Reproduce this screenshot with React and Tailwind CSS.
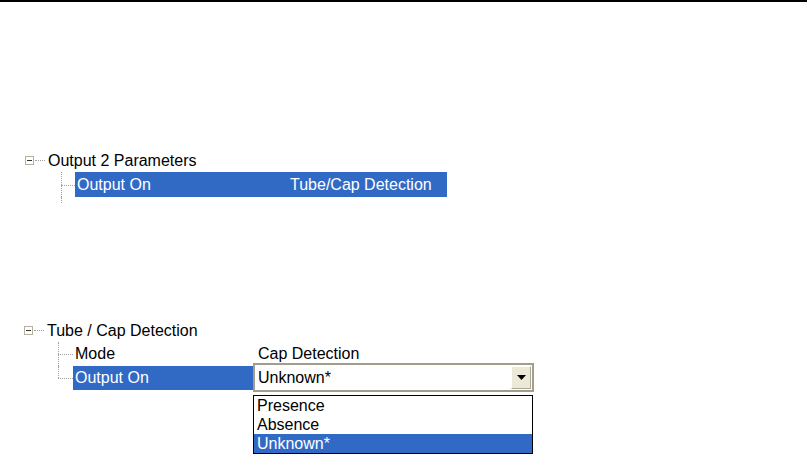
import React from 'react';

// XP-style minus box for an expanded tree node
function ExpandBox() {
  return (
    <div className="flex h-[9px] w-[9px] shrink-0 items-center justify-center border border-[#B5B19E] bg-white">
      <div className="h-[1px] w-[5px] bg-[#333]" />
    </div>
  );
}

function TreeHeader({ label, indent }) {
  return (
    <div className={`flex h-[24px] items-center ${indent}`}>
      <ExpandBox />
      <div className="ml-[1px] w-[10px] border-t border-dotted border-[#A0A0A0]" />
      <span className="ml-[3px] mt-[2px] text-[16px] leading-none text-black">{label}</span>
    </div>
  );
}

// vertical + horizontal dotted connector for a child row
function Connector({ last, width }) {
  return (
    <div className={`relative h-full shrink-0 ${width}`}>
      <div
        className={`border-l border-dotted border-[#A0A0A0] ${last ? 'h-1/2' : 'h-full'}`}
      />
      <div className="absolute left-0 top-1/2 w-full border-t border-dotted border-[#A0A0A0]" />
    </div>
  );
}

export default function App() {
  return (
    <div
      className="relative h-[456px] w-[810px] overflow-hidden bg-white text-black"
      style={{ fontFamily: '"Liberation Sans", Arial, sans-serif' }}
    >
      {/* top rule */}
      <div className="h-[2px] w-[807px] bg-black" />

      {/* Output 2 Parameters */}
      <div className="mt-[146px]">
        <TreeHeader label="Output 2 Parameters" indent="pl-[25px]" />
        <div className="flex h-[25px] pl-[61px]">
          <Connector width="w-[14px]" />
          <div className="flex w-[372px] items-center bg-[#316AC5] text-[16px] text-white">
            <span className="w-[215px] pl-[2px]">Output On</span>
            <span>Tube/Cap Detection</span>
          </div>
        </div>
        <div className="ml-[61px] h-[6px] border-l border-dotted border-[#A0A0A0]" />
      </div>

      {/* Tube / Cap Detection */}
      <div className="mt-[115px]">
        <TreeHeader label="Tube / Cap Detection" indent="pl-[24px]" />
        <div className="flex h-[24px] pl-[58px]">
          <Connector width="w-[15px]" />
          <div className="flex items-center text-[16px]">
            <span className="w-[183px] pl-[2px]">Mode</span>
            <span className="pl-[2px]">Cap Detection</span>
          </div>
        </div>
        <div className="flex h-[24px] pl-[58px]">
          <Connector last width="w-[15px]" />
          <div className="flex w-[180px] items-center bg-[#316AC5] pl-[2px] text-[16px] text-white">
            Output On
          </div>
          {/* combobox */}
          <div className="relative -mt-[3px] h-[29px] w-[281px] shrink-0">
            <div className="flex h-full items-center border-2 border-[#A29E89] bg-white">
              <span className="flex-1 pl-[3px] text-[16px]">Unknown*</span>
              <div className="mr-[1px] flex h-[23px] w-[20px] items-center justify-center border border-t-white border-l-white border-b-[#ACA899] border-r-[#ACA899] bg-[#ECE9D8]">
                <svg width="9" height="5" viewBox="0 0 9 5">
                  <path d="M0 0h9L4.5 5z" fill="#000" />
                </svg>
              </div>
            </div>
            {/* open list */}
            <div className="absolute left-0 top-full mt-[3px] w-[280px] border border-black bg-white text-[16px] leading-[19px]">
              <div className="h-[19px] pl-[3px]">Presence</div>
              <div className="h-[19px] pl-[3px]">Absence</div>
              <div className="h-[19px] bg-[#316AC5] pl-[3px] text-white">Unknown*</div>
            </div>
          </div>
        </div>
      </div>
    </div>
  );
}
